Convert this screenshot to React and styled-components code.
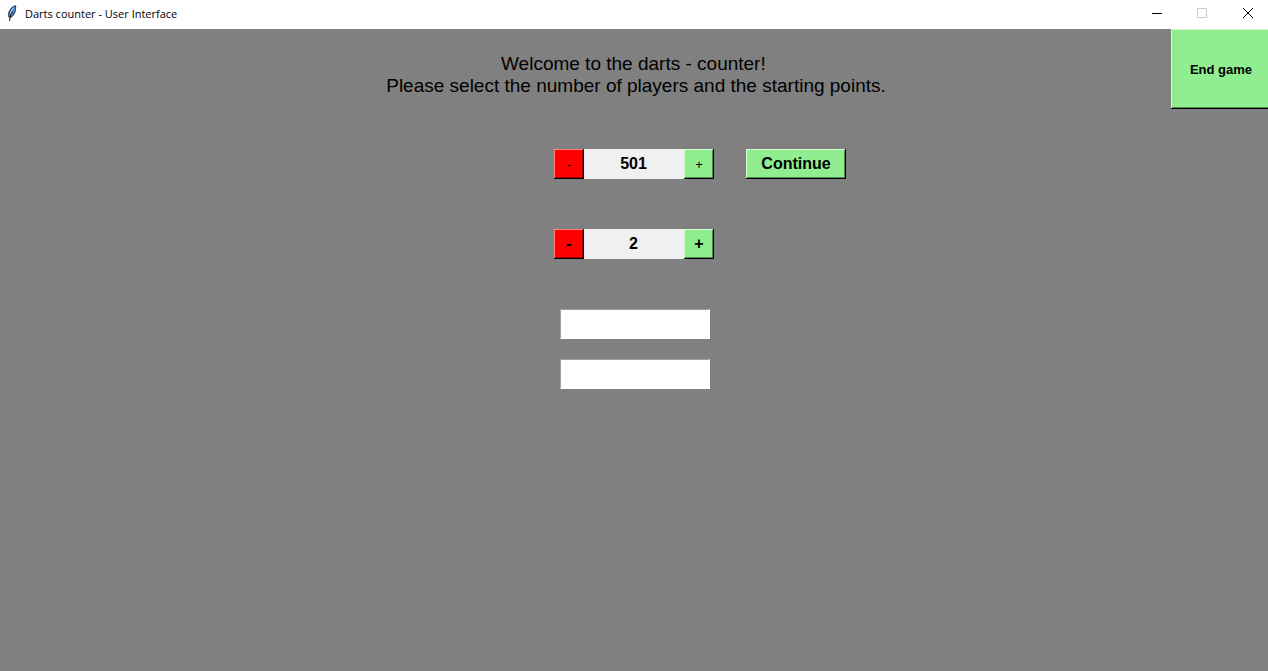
import React, { useState } from "react";
import styled, { createGlobalStyle, css } from "styled-components";

const GlobalStyle = createGlobalStyle`
  * { box-sizing: border-box; }
  body {
    margin: 0;
    background: #808080;
    color: #000;
    font-family: "Liberation Sans", Arial, sans-serif;
  }
`;

const tones = {
  green: { face: "#90ee90", light: "#d2f9d2", shade: "#4d8a4d" },
  red: { face: "#ff0000", light: "#ff8080", shade: "#a00000" },
};

const Window = styled.div`
  display: flex;
  flex-direction: column;
  min-height: 100vh;
  overflow: hidden;
`;

const TitleBar = styled.header`
  display: flex;
  align-items: center;
  height: 29px;
  padding-left: 4px;
  background: #fff;
`;

const Title = styled.h1`
  flex: 1;
  margin: 0;
  padding: 0 0 2px 5px;
  font: 400 11px/16px "Open Sans", "Noto Sans", sans-serif;
  color: #000;
  white-space: nowrap;
`;

const Caption = styled.div`
  display: flex;
  height: 100%;
  margin-right: -3px;
`;

const CaptionButton = styled.button`
  display: flex;
  justify-content: center;
  align-items: center;
  width: 46px;
  padding: 0 0 3px;
  border: 0;
  background: transparent;
  color: ${({ disabled }) => (disabled ? "#ccc" : "#000")};
`;

const Content = styled.main`
  flex: 1;
  background: #808080;
`;

const TopRow = styled.div`
  display: grid;
  grid-template-columns: 97px 1fr 97px;
  min-height: 80px;
`;

const Intro = styled.p`
  grid-column: 2;
  margin: 0;
  padding: 24px 0 0 4px;
  font-size: 19px;
  line-height: 22px;
  text-align: center;
  white-space: pre;
`;

const TkButton = styled.button`
  ${({ $tone }) => css`
    background: ${tones[$tone].face};
    box-shadow:
      inset -1px -1px #000,
      inset 1px 1px ${tones[$tone].light},
      inset -2px -2px ${tones[$tone].shade};
  `}
  width: ${({ $width = 30 }) => $width}px;
  height: ${({ $height = 30 }) => $height}px;
  padding: 0;
  border: 0;
  color: #000;
  font-family: inherit;
  font-size: ${({ $size = 16 }) => $size}px;
  font-weight: ${({ $light }) => ($light ? 400 : 700)};
  white-space: nowrap;
`;

const Settings = styled.form`
  display: grid;
  grid-template-columns: 1fr 160px 1fr;
  column-gap: 32px;
  row-gap: 50px;
  padding-top: 40px;
`;

const Stepper = styled.div`
  grid-column: 2;
  display: flex;
`;

const Value = styled.output`
  flex: 1;
  padding-right: 1px;
  background: #f0f0f0;
  font-size: 16px;
  font-weight: 700;
  line-height: 29px;
  text-align: center;
`;

const Names = styled.div`
  grid-column: 2;
  display: flex;
  flex-direction: column;
  gap: 20px;
  padding-left: 6px;
`;

const NameInput = styled.input`
  width: 150px;
  height: 30px;
  padding: 0 4px;
  border: 1px solid;
  border-color: #a0a0a0 #fff #fff #a0a0a0;
  background: #fff;
  font: 16px "Liberation Sans", Arial, sans-serif;
  outline: 0;
`;

function Feather() {
  return (
    <svg width="16" height="19" viewBox="0 0 16 19" aria-hidden="true">
      <path d="M10.5 0.5 L12 0.5 L12.2 3 L11.5 7 L10 10 L7.5 12.5 L5.5 13 L4.2 11.5 L4.2 8 L5.5 5 L8 2 Z" fill="#1b2430" />
      <path d="M11 1 L8.2 3 L6 6 L5 9 L5 11.5 L7 12 L9.5 9.5 L10.8 6.5 L11.5 3 Z" fill="#4c88cc" />
      <path d="M10.5 1.8 L8.2 3.8 L6.3 7 L5.6 9.8 L7.5 7.5 Z" fill="#a5cff5" />
      <path d="M8.5 6.5 L6.3 11 L5.5 16" fill="none" stroke="#10151c" strokeWidth="1" />
    </svg>
  );
}

function Glyph({ d }) {
  return (
    <svg width="12" height="12" viewBox="0 0 12 12" fill="none" stroke="currentColor" aria-hidden="true">
      <path d={d} />
    </svg>
  );
}

function Counter({ label, value, onStep, step = 1, small }) {
  const buttonStyle = small ? { $size: 13, $light: true } : {};
  return (
    <Stepper role="group" aria-label={label}>
      <TkButton type="button" $tone="red" {...buttonStyle} onClick={() => onStep(-step)}>-</TkButton>
      <Value aria-label={label}>{value}</Value>
      <TkButton type="button" $tone="green" {...buttonStyle} onClick={() => onStep(step)}>+</TkButton>
    </Stepper>
  );
}

export default function App() {
  const [points, setPoints] = useState(501);
  const [players, setPlayers] = useState(2);

  return (
    <Window>
      <GlobalStyle />
      <TitleBar>
        <Feather />
        <Title>Darts counter - User Interface</Title>
        <Caption>
          <CaptionButton type="button" aria-label="Minimize">
            <Glyph d="M2 6.5H12" />
          </CaptionButton>
          <CaptionButton type="button" aria-label="Maximize" disabled>
            <Glyph d="M1.5 1.5H10.5V10.5H1.5Z" />
          </CaptionButton>
          <CaptionButton type="button" aria-label="Close">
            <Glyph d="M1 1L11 11M11 1L1 11" />
          </CaptionButton>
        </Caption>
      </TitleBar>
      <Content>
        <TopRow>
          <Intro>
            {"Welcome to the darts - counter! \nPlease select the number of players and the starting points."}
          </Intro>
          <TkButton type="button" $tone="green" $width={100} $height={80} $size={13}>End game</TkButton>
        </TopRow>
        <Settings onSubmit={(event) => event.preventDefault()}>
          <Counter
            label="Starting points"
            value={points}
            step={100}
            small
            onStep={(change) => setPoints((n) => Math.max(101, n + change))}
          />
          <TkButton type="submit" $tone="green" $width={100}>Continue</TkButton>
          <Counter
            label="Number of players"
            value={players}
            onStep={(change) => setPlayers((n) => Math.max(1, n + change))}
          />
          <Names>
            {Array.from({ length: players }, (_, i) => (
              <NameInput key={i} type="text" aria-label={`Name of player ${i + 1}`} />
            ))}
          </Names>
        </Settings>
      </Content>
    </Window>
  );
}
